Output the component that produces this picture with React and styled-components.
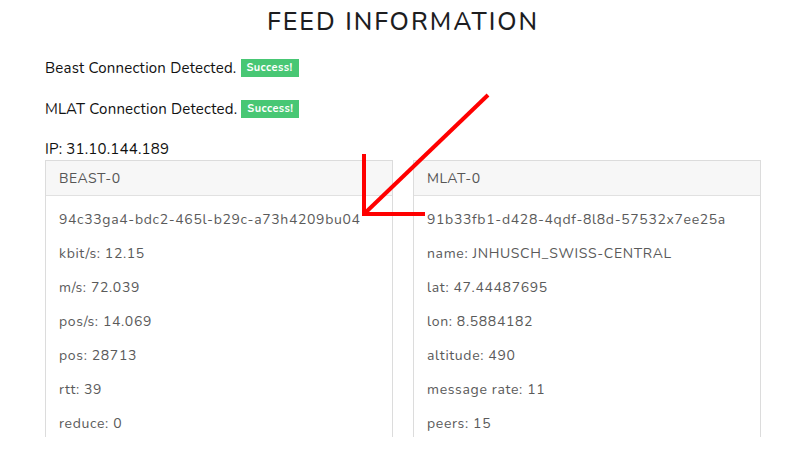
import React from 'react';
import styled, { createGlobalStyle } from 'styled-components';

const GlobalStyle = createGlobalStyle`
  html, body {
    margin: 0;
    padding: 0;
    background: #ffffff;
  }
  body {
    font-family: 'Nunito', 'Noto Sans', 'Open Sans', sans-serif;
    color: #212529;
  }
`;

const beast = {
  title: 'BEAST-0',
  rows: [
    '94c33ga4-bdc2-465l-b29c-a73h4209bu04',
    'kbit/s: 12.15',
    'm/s: 72.039',
    'pos/s: 14.069',
    'pos: 28713',
    'rtt: 39',
    'reduce: 0',
  ],
};

const mlat = {
  title: 'MLAT-0',
  rows: [
    '91b33fb1-d428-4qdf-8l8d-57532x7ee25a',
    'name: JNHUSCH_SWISS-CENTRAL',
    'lat: 47.44487695',
    'lon: 8.5884182',
    'altitude: 490',
    'message rate: 11',
    'peers: 15',
  ],
};

const Page = styled.div`
  position: relative;
  width: 790px;
  height: 466px;
  overflow: hidden;
`;

const Content = styled.div`
  height: 437px;
  overflow: hidden;
  padding: 0 29px 0 45px;
  box-sizing: border-box;
`;

const Title = styled.h1`
  margin: 0;
  padding-top: 9px;
  height: 36px;
  text-align: center;
  font-size: 25px;
  font-weight: 500;
  letter-spacing: 2px;
  color: #1d1d1f;
  line-height: 26px;
`;

const StatusLine = styled.p`
  margin: 0;
  height: ${p => p.$h}px;
  padding-top: ${p => p.$pt || 0}px;
  box-sizing: border-box;
  display: flex;
  align-items: center;
  gap: 4px;
  font-size: 15px;
  letter-spacing: 0.2px;
  color: #111;
`;

const Badge = styled.span`
  display: inline-block;
  background: #48c774;
  color: #fff;
  font-size: 11px;
  font-weight: 700;
  letter-spacing: 0.4px;
  padding: 0 6px;
  height: 18px;
  line-height: 18px;
`;

const Columns = styled.div`
  display: grid;
  grid-template-columns: 348px 348px;
  gap: 20px;
`;

const Card = styled.section`
  border: 1px solid #dcdcdc;
  border-bottom: none;
  background: #fff;
`;

const CardHeader = styled.div`
  height: 34px;
  background: #f7f7f7;
  border-bottom: 1px solid #e1e1e1;
  padding: 0 13px;
  display: flex;
  align-items: center;
  font-size: 14px;
  color: #555;
  letter-spacing: 0.5px;
`;

const CardBody = styled.div`
  padding: 7px 13px 0;
`;

const Row = styled.div`
  height: 34px;
  line-height: 34px;
  font-size: 14px;
  color: #5a5a5a;
  letter-spacing: 0.65px;
  white-space: nowrap;
`;

const Arrow = styled.svg`
  position: absolute;
  left: 0;
  top: 0;
  pointer-events: none;
`;

const FeedCard = ({ data }) => (
  <Card>
    <CardHeader>{data.title}</CardHeader>
    <CardBody>
      {data.rows.map(r => (
        <Row key={r}>{r}</Row>
      ))}
    </CardBody>
  </Card>
);

export default function App() {
  return (
    <Page>
      <GlobalStyle />
      <Content>
        <Title>FEED INFORMATION</Title>
        <StatusLine $h={46}>
          Beast Connection Detected. <Badge>Success!</Badge>
        </StatusLine>
        <StatusLine $h={35}>
          MLAT Connection Detected. <Badge>Success!</Badge>
        </StatusLine>
        <StatusLine $h={34} $pt={12}>IP: 31.10.144.189</StatusLine>
        <Columns>
          <FeedCard data={beast} />
          <FeedCard data={mlat} />
        </Columns>
      </Content>
      <Arrow width="790" height="466" viewBox="0 0 790 466">
        <g stroke="#ff0000" strokeWidth="4" fill="none" strokeLinecap="butt">
          <line x1="488" y1="95" x2="365" y2="213" />
          <line x1="364" y1="154" x2="364" y2="216" />
          <line x1="362" y1="214" x2="425" y2="214" />
        </g>
      </Arrow>
    </Page>
  );
}
